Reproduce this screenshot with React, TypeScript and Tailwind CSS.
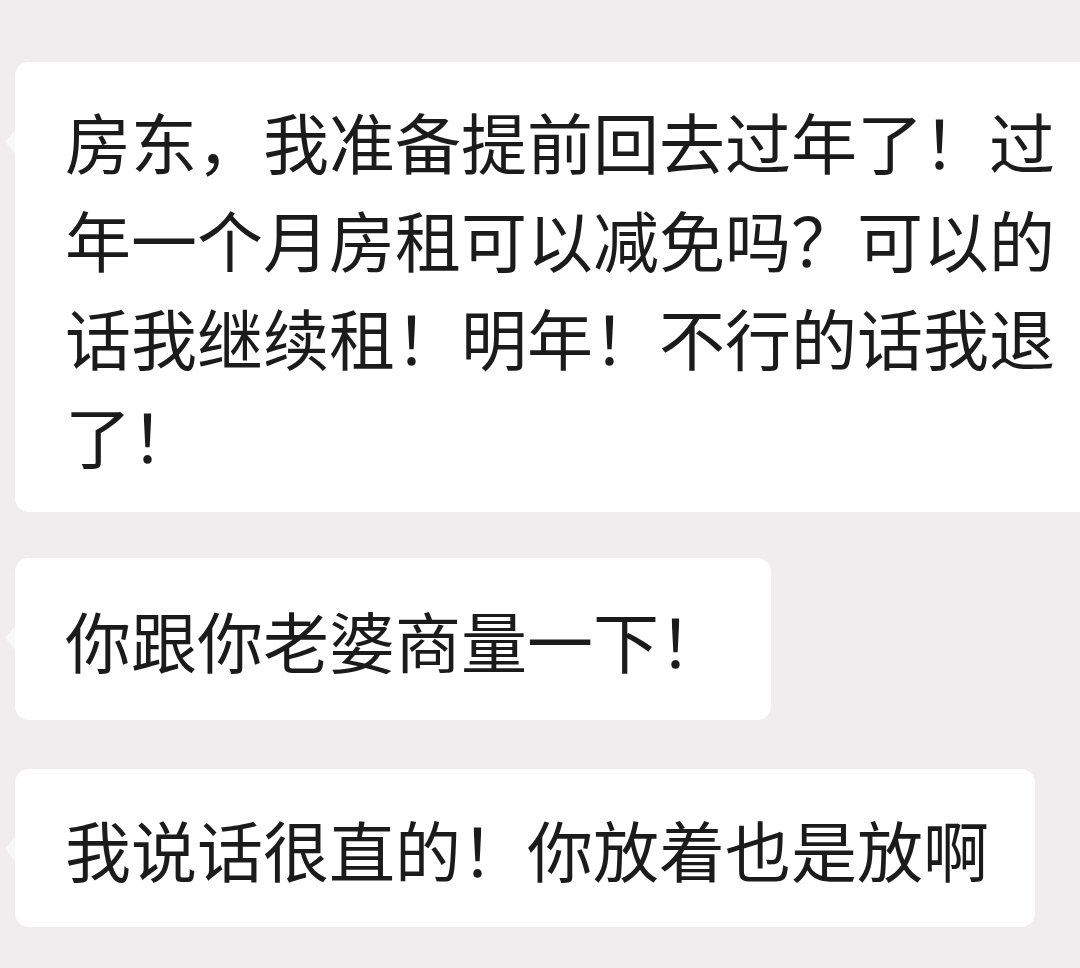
const messages = [
  {
    id: "m1",
    text: "房东，我准备提前回去过年了！过年一个月房租可以减免吗？可以的话我继续租！明年！不行的话我退了！",
    wide: true,
    spacing: "mt-[62px] py-[29px]",
  },
  {
    id: "m2",
    text: "你跟你老婆商量一下！",
    wide: false,
    spacing: "mt-[46px] py-[32px]",
  },
  {
    id: "m3",
    text: "我说话很直的！你放着也是放啊",
    wide: false,
    spacing: "mt-[49px] py-[30px]",
  },
];

const Bubble = ({
  text,
  wide,
  spacing,
}: {
  text: string;
  wide: boolean;
  spacing: string;
}) => (
  <div
    className={`relative shrink-0 rounded-[14px] bg-white pl-[50px] pr-[46px] ${spacing} ${
      wide ? "w-[1096px]" : "w-fit"
    }`}
  >
    {/* little tail on the left side */}
    <span className="absolute left-[-10px] top-[68px] h-0 w-0 border-y-[12px] border-r-[10px] border-y-transparent border-r-[#f8f8f8]" />
    <p className="text-[66px] leading-[98px] font-normal text-[#1b1b1b]">{text}</p>
  </div>
);

export default function App() {
  return (
    <div
      className="h-[968px] w-[1080px] overflow-hidden bg-[#efeded] pl-[15px]"
      style={{ fontFamily: '"Noto Sans CJK SC", "Noto Sans", sans-serif' }}
    >
      <div className="flex flex-col items-start">
        {messages.map((m) => (
          <Bubble key={m.id} text={m.text} wide={m.wide} spacing={m.spacing} />
        ))}
      </div>
    </div>
  );
}
